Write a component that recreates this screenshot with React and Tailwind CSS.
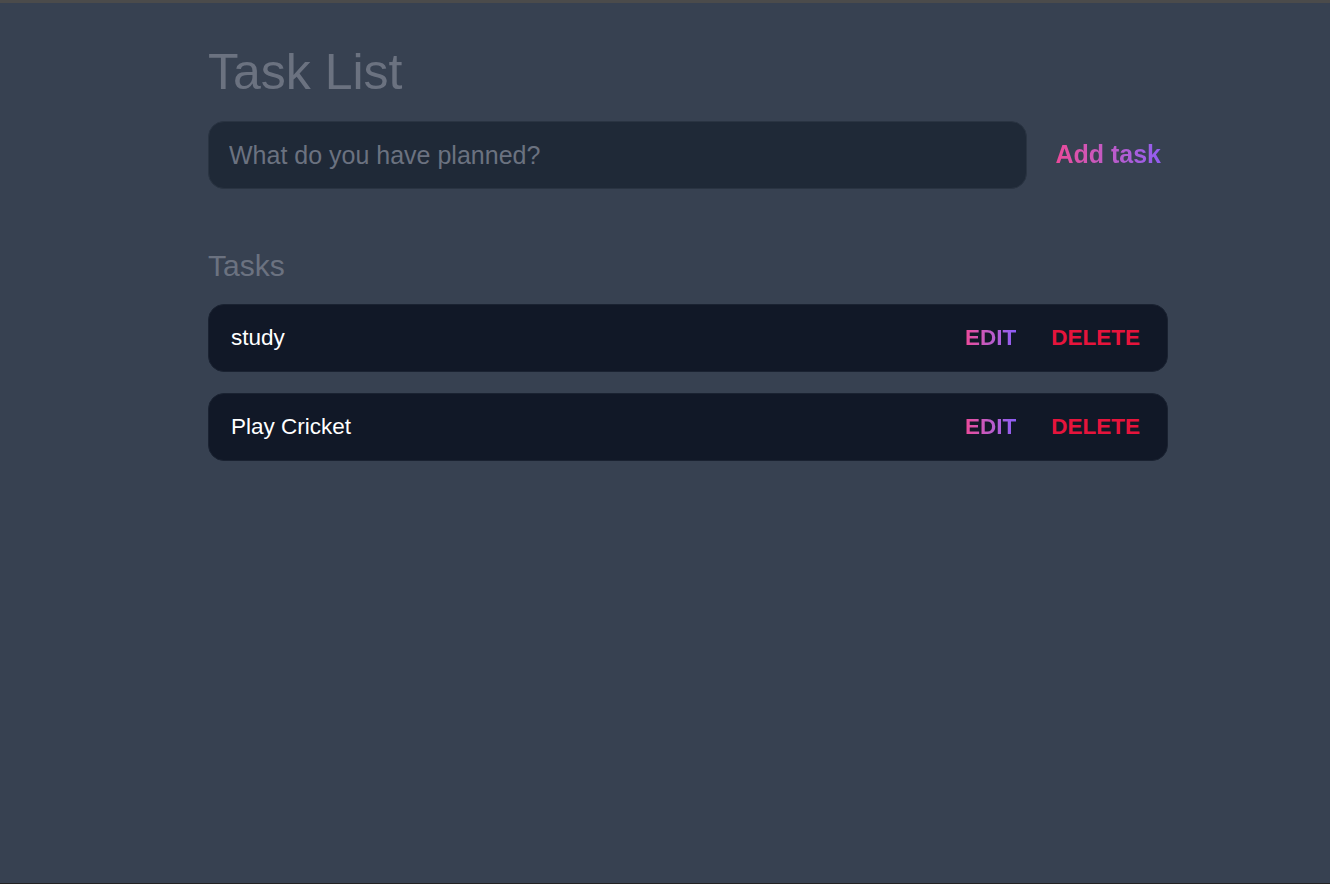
import { useState } from 'react'

export default function App() {
  const [tasks] = useState(['study', 'Play Cricket'])
  const [text, setText] = useState('')

  return (
    <div className="h-[884px] overflow-hidden bg-[#374151] border-t-[3px] border-t-[#4b4b4b] border-b border-b-[#222] font-['Liberation_Sans',Arial,sans-serif]">
      <div className="ml-[208px] w-[960px] pt-[44px]">
        <h1 className="text-[50px] leading-none text-[#6b7280]">Task List</h1>

        {/* New task */}
        <div className="flex items-center mt-[24px]">
          <input
            value={text}
            onChange={(e) => setText(e.target.value)}
            placeholder="What do you have planned?"
            className="flex-1 h-[68px] px-5 rounded-2xl bg-[#1f2937] border border-[#2a3442] text-[25px] text-white placeholder:text-[#6b7280] outline-none"
          />
          <button className="ml-7 pr-[7px] text-[25px] font-bold bg-linear-to-r from-[#ec4899] to-[#8b5cf6] bg-clip-text text-transparent">
            Add task
          </button>
        </div>

        <h2 className="mt-[59px] text-3xl leading-9 text-[#6b7280]">Tasks</h2>

        <div className="mt-5 flex flex-col gap-[21px]">
          {tasks.map((t) => (
            <div key={t} className="flex items-center h-[68px] pl-[22px] pr-[27px] rounded-2xl bg-[#111827] border border-[#1a2231]">
              <span className="flex-1 text-[22.5px] text-white">{t}</span>
              <button className="text-[22.5px] font-bold bg-linear-to-r from-[#ec4899] to-[#8b5cf6] bg-clip-text text-transparent">EDIT</button>
              <button className="ml-[35px] text-[22.5px] font-bold text-[#e6143c]">DELETE</button>
            </div>
          ))}
        </div>
      </div>
    </div>
  )
}
